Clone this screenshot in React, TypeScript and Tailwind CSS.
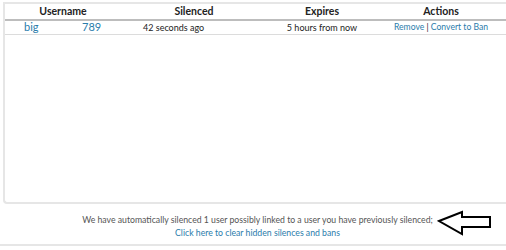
const font = { fontFamily: 'Lato, "Liberation Sans", sans-serif' };

const Arrow = () => (
  <svg width="56" height="26" viewBox="0 0 56 26" className="shrink-0">
    <polygon
      points="2,11 25,2 25,7 53,7 53,17 25,17 25,24"
      fill="white"
      stroke="black"
      strokeWidth="2"
      strokeLinejoin="miter"
    />
  </svg>
);

export default function App() {
  return (
    <div className="w-[506px] h-[250px] overflow-hidden bg-white text-[#222]" style={font}>
      <div className="ml-[3px] mt-[2px] w-[520px] h-[202px] border-l-2 border-t-2 border-b-2 border-[#e6e6e6] rounded-bl-[4px]">
        <div className="flex h-[17px] items-center text-[10.5px] font-bold text-[#222] border-b-2 border-[#bdbdbd]">
          <div className="w-[116px] text-center">Username</div>
          <div className="w-[146px] text-center">Silenced</div>
          <div className="w-[110px] text-center">Expires</div>
          <div className="w-[128px] text-center">Actions</div>
        </div>
        <div className="flex h-[14px] items-center border-b border-[#dcdcdc]">
          <div className="w-[116px] flex text-[11px] text-[#2a7cab]">
            <span className="ml-[19px] w-[58px]">big</span>
            <span>789</span>
          </div>
          <div className="w-[146px] pl-[22px] text-[9px]">42 seconds ago</div>
          <div className="w-[110px] text-center text-[9px]">5 hours from now</div>
          <div className="w-[128px] text-center text-[8.6px] text-[#2a7cab]">
            <span>Remove</span>
            <span className="text-[#222]"> | </span>
            <span>Convert to Ban</span>
          </div>
        </div>
      </div>
      <div className="flex items-start h-[40px] pt-[9px]">
        <div className="w-[351px] ml-[82px] text-center text-[8.7px] leading-[13px] text-[#555] whitespace-nowrap">
          <div>We have automatically silenced 1 user possibly linked to a user you have previously silenced;</div>
          <div className="text-[#2a7cab]">Click here to clear hidden silences and bans</div>
        </div>
        <div className="ml-[4px] -mt-[3px]">
          <Arrow />
        </div>
      </div>
      <div className="h-[2px] bg-[#e6e6e6]" />
    </div>
  );
}
